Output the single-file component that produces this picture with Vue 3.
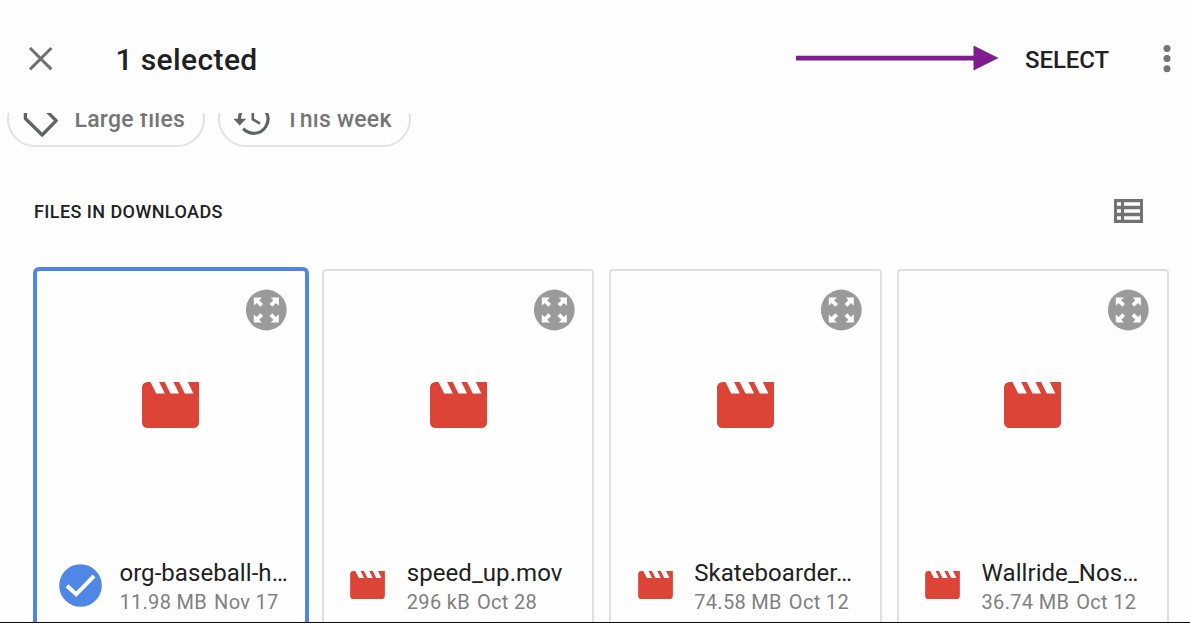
<script setup>
const files = [
  { name: 'org-baseball-h…', size: '11.98 MB', date: 'Nov 17', selected: true },
  { name: 'speed_up.mov', size: '296 kB', date: 'Oct 28', selected: false },
  { name: 'Skateboarder…', size: '74.58 MB', date: 'Oct 12', selected: false },
  { name: 'Wallride_Nos…', size: '36.74 MB', date: 'Oct 12', selected: false },
]
</script>

<template>
  <div class="screen">
    <header class="bar">
      <svg class="close" width="26" height="26" viewBox="0 0 26 26"><path d="M2 2 23.4 23.4M23.4 2 2 23.4" fill="none" stroke="#6f6f6f" stroke-width="2.9" /></svg>
      <h1 class="title">1 selected</h1>
      <svg class="arrow" width="204" height="28" viewBox="0 0 204 28"><path d="M0 10.8H177.5V.5L202.5 13.1 177.5 25.6V15.6H0Z" fill="#7f1d8e" /></svg>
      <button class="select">SELECT</button>
      <svg class="more" width="8" height="30" viewBox="0 0 8 30" fill="#737373"><circle cx="4" cy="4.5" r="3.5" /><circle cx="4" cy="14.6" r="3.5" /><circle cx="4" cy="24.8" r="3.5" /></svg>
    </header>

    <main class="content">
      <div class="chips">
        <div class="chip large">
          <svg width="36" height="40" viewBox="0 0 36 40"><path d="M2.4 3V19.5L19.2 36 33.2 21.7 16.5 5Z" fill="none" stroke="#5f6368" stroke-width="3.3" stroke-linejoin="round" /></svg>
          <span>Large files</span>
        </div>
        <div class="chip week">
          <svg width="36" height="40" viewBox="0 0 36 40"><path d="M5.4 20A14.3 14.3 0 1 1 9.2 29.7" fill="none" stroke="#5f6368" stroke-width="3.2" /><path d="M-.7 19.7H12.1L5.7 26.6Z" fill="#5f6368" /><path d="M18.8 10V20.3L26 24.7" fill="none" stroke="#5f6368" stroke-width="2.6" /></svg>
          <span>This week</span>
        </div>
      </div>

      <div class="section">
        <h2>FILES IN DOWNLOADS</h2>
        <svg width="29" height="24" viewBox="0 0 29 24"><path fill="#727272" fill-rule="evenodd" d="M0 0H29V24H0ZM3 3.2V6.8H7V3.2ZM10 3.2V6.8H26V3.2ZM3 10.2V13.8H7V10.2ZM10 10.2V13.8H26V10.2ZM3 17.2V20.8H7V17.2ZM10 17.2V20.8H26V17.2Z" /></svg>
      </div>

      <div class="grid">
        <article v-for="file in files" :key="file.name" class="card" :class="{ selected: file.selected }">
          <svg class="expand" width="41" height="41" viewBox="0 0 41 41">
            <circle cx="20.3" cy="20" r="20.4" fill="#9a9a9a" />
            <g fill="#fff" transform="translate(-.2 -.5)">
              <path d="M8 8H16.2L13.4 10.8 17.2 14.6 14.6 17.2 10.8 13.4 8 16.2Z" />
              <path d="M33 8H24.8L27.6 10.8 23.8 14.6 26.4 17.2 30.2 13.4 33 16.2Z" />
              <path d="M8 33H16.2L13.4 30.2 17.2 26.4 14.6 23.8 10.8 27.6 8 24.8Z" />
              <path d="M33 33H24.8L27.6 30.2 23.8 26.4 26.4 23.8 30.2 27.6 33 24.8Z" />
            </g>
          </svg>
          <svg class="clap" width="57" height="46" viewBox="0 0 57 46"><path fill="#db4437" d="M5.5 0H8.5L14.2 11.5H22.8L17.1 0H22.8L28.5 11.5H37.1L31.4 0H37.1L42.8 11.5H51.4L45.7 0H57V40.5A5.5 5.5 0 0 1 51.5 46H5.5A5.5 5.5 0 0 1 0 40.5V5.5A5.5 5.5 0 0 1 5.5 0Z" /></svg>
          <footer class="info">
            <div class="badge">
              <svg v-if="file.selected" width="43" height="43" viewBox="0 0 43 43"><circle cx="21.5" cy="21.5" r="21.3" fill="#4f87e5" /><path d="M8 21.7 17.2 30.3 35 12" fill="none" stroke="#fff" stroke-width="4" /></svg>
              <svg v-else width="35" height="28" viewBox="0 0 57 46"><path fill="#db4437" d="M5.5 0H8.5L14.2 11.5H22.8L17.1 0H22.8L28.5 11.5H37.1L31.4 0H37.1L42.8 11.5H51.4L45.7 0H57V40.5A5.5 5.5 0 0 1 51.5 46H5.5A5.5 5.5 0 0 1 0 40.5V5.5A5.5 5.5 0 0 1 5.5 0Z" /></svg>
            </div>
            <div class="text">
              <div class="name">{{ file.name }}</div>
              <div class="meta"><span>{{ file.size }}</span><span>{{ file.date }}</span></div>
            </div>
          </footer>
        </article>
      </div>
    </main>
  </div>
</template>

<style>
body { background: #fff; }
</style>

<style scoped>
.screen {
  box-sizing: border-box;
  width: 1190px;
  height: 623px;
  overflow: hidden;
  display: flex;
  flex-direction: column;
  background: #fefefe;
  border-bottom: 1px solid #0c0c0c;
  font-family: Roboto, sans-serif;
  color: #212121;
}
.bar {
  flex: none;
  box-sizing: border-box;
  height: 113px;
  padding: 5px 19px 0 28px;
  display: flex;
  align-items: center;
}
.title {
  margin: 2px 0 0 61.5px;
  font-size: 30px;
  font-weight: 500;
  line-height: 36px;
  letter-spacing: 0.38px;
  white-space: nowrap;
}
.arrow { margin-left: auto; }
.select {
  width: 85px;
  margin: 2px 0 0 25px;
  padding: 0;
  border: 0;
  background: none;
  color: #212121;
  font: 500 24px/30px Roboto, sans-serif;
  letter-spacing: -0.1px;
  text-align: left;
}
.more { margin-left: 53px; }
.content {
  flex: 1;
  min-height: 0;
  overflow: hidden;
}
.chips {
  display: flex;
  gap: 13px;
  margin: -22px 0 0 7px;
}
.chip {
  box-sizing: border-box;
  height: 56px;
  border: 2px solid #e2e2e2;
  border-radius: 28px;
  display: flex;
  align-items: center;
  gap: 15.5px;
  padding-left: 14px;
  font-size: 23px;
  font-weight: 500;
  line-height: 28px;
  letter-spacing: 0.25px;
  color: #757575;
  white-space: nowrap;
}
.chip span { margin-top: 2px; }
.chip svg { overflow: visible; }
.large { width: 198px; }
.week { width: 193px; }
.section {
  display: flex;
  justify-content: space-between;
  align-items: center;
  height: 30px;
  margin: 49px 47px 0 34px;
}
.section h2 {
  margin: 2px 0 0;
  font-size: 18px;
  font-weight: 500;
  line-height: 24px;
  letter-spacing: 0.42px;
}
.grid {
  display: grid;
  grid-template-columns: repeat(4, 272.4px);
  column-gap: 15px;
  margin: 43px 0 0 34.5px;
}
.card {
  box-sizing: border-box;
  height: 400px;
  border: 2px solid #dfdfdf;
  border-radius: 4px;
  padding: 19px 17.6px 0;
  display: flex;
  flex-direction: column;
}
.card.selected {
  height: 404px;
  margin: -2px -2px -2px -1.6px;
  border: 4px solid #4f87e0;
  border-radius: 6px;
}
.expand {
  align-self: flex-end;
  overflow: visible;
}
.clap { align-self: center; margin-top: 51px; }
.info {
  display: flex;
  align-items: center;
  height: 60px;
  margin: 127px -18px 0 9px;
}
.selected .info { margin-left: 8.6px; }
.badge {
  flex: none;
  width: 35px;
  margin-right: 21.3px;
  display: flex;
  justify-content: center;
}
.badge svg { flex: none; }
.text {
  margin-top: 4px;
  white-space: nowrap;
}
.name {
  font-size: 24px;
  line-height: 30px;
  letter-spacing: 0.06px;
}
.meta {
  display: flex;
  gap: 7px;
  font-size: 20px;
  line-height: 29px;
  letter-spacing: 0.32px;
  color: #808080;
}
</style>
